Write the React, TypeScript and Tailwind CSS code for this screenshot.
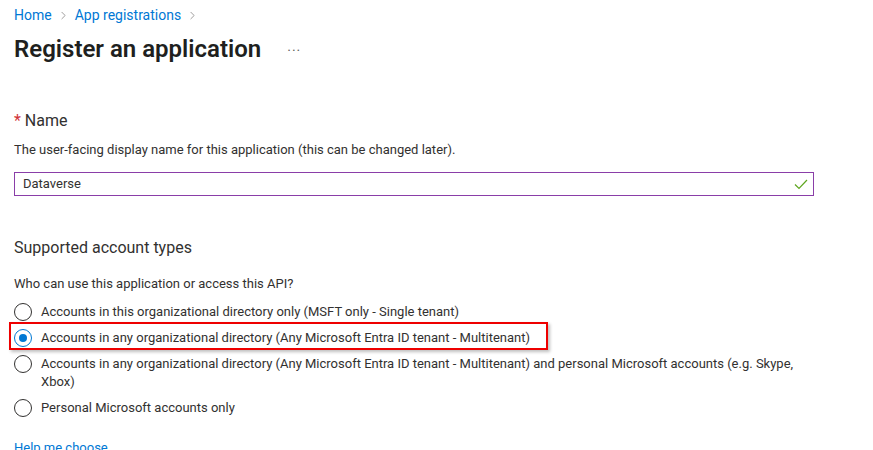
import { ChevronRight } from 'lucide-react'

const options = [
  'Accounts in this organizational directory only (MSFT only - Single tenant)',
  'Accounts in any organizational directory (Any Microsoft Entra ID tenant - Multitenant)',
  'Accounts in any organizational directory (Any Microsoft Entra ID tenant - Multitenant) and personal Microsoft accounts (e.g. Skype, Xbox)',
  'Personal Microsoft accounts only',
]

function Radio({ checked }: { checked: boolean }) {
  return (
    <span
      className={`flex h-[18px] w-[18px] shrink-0 items-center justify-center rounded-full border ${
        checked ? 'border-[#0078d4]' : 'border-[#323130]'
      }`}
    >
      {checked && <span className="h-[8px] w-[8px] rounded-full bg-[#0078d4]" />}
    </span>
  )
}

export default function App() {
  return (
    <div className="h-[450px] overflow-hidden bg-white pl-[14px] pt-[5px] font-['Roboto',sans-serif] text-[#323130]">
      <nav className="flex h-[20px] items-center text-[14px] leading-[20px] text-[#0078d4]">
        <span>Home</span>
        <ChevronRight className="mx-[5px] text-[#8a8886]" size={13} strokeWidth={1.5} />
        <span>App registrations</span>
        <ChevronRight className="mx-[5px] text-[#8a8886]" size={13} strokeWidth={1.5} />
      </nav>

      <div className="mt-[8px] flex h-[32px] items-center">
        <h1 className="text-[24px] font-semibold leading-[32px] text-[#201f1e]">Register an application</h1>
        <span className="ml-[26px] mt-[4px] text-[14px] tracking-[1px] text-[#605e5c]">···</span>
      </div>

      <div className="mt-[45px] text-[16px] leading-[22px]">
        <span className="text-[#d13438]">*</span> Name
      </div>
      <p className="mt-[9px] text-[13px] leading-[18px]">
        The user-facing display name for this application (this can be changed later).
      </p>

      <div className="mt-[13px] flex h-[24px] w-[800px] items-center justify-between border border-[#8a3ea8] pl-[8px] pr-[5px] text-[13px]">
        <span>Dataverse</span>
        <svg width="14" height="11" viewBox="0 0 14 11" fill="none">
          <path d="M1 5.5 L5 9.5 L13 1" stroke="#5ea61f" strokeWidth="1.2" />
        </svg>
      </div>

      <h2 className="mt-[41px] text-[16px] leading-[22px]">Supported account types</h2>
      <p className="mt-[16px] text-[13px] leading-[18px]">Who can use this application or access this API?</p>

      <div className="mt-[10px] flex w-[800px] flex-col gap-[8px] text-[13px] leading-[18px]">
        {options.map((o, i) => (
          <div key={o} className="relative flex items-start gap-[9px]">
            <Radio checked={i === 1} />
            <span className="w-[772px]">{o}</span>
            {i === 1 && (
              <span className="pointer-events-none absolute -top-[7px] -bottom-[3px] -left-[5px] w-[539px] border-[2px] border-[#ee0000] shadow-[2px_2px_3px_rgba(0,0,0,0.25)]" />
            )}
          </div>
        ))}
      </div>

      <a className="mt-[22px] block text-[13px] leading-[18px] text-[#0078d4]">Help me choose</a>
    </div>
  )
}
